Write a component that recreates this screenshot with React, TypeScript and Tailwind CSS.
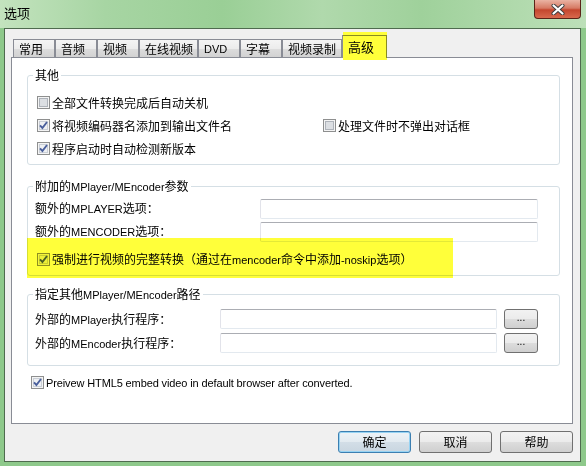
import React from 'react'

// Latin runs are drawn smaller, in a Tahoma-like face, the way the dialog mixes them
const latin = /([A-Za-z0-9./-]+(?: [A-Za-z0-9./-]+)*)/

const Txt = ({ t }: { t: string }) => (
  <>
    {t.split(latin).map((p, i) =>
      i % 2 === 1 ? (
        <span key={i} className="font-['Liberation_Sans',sans-serif] text-[11px]">
          {p}
        </span>
      ) : (
        <React.Fragment key={i}>{p}</React.Fragment>
      )
    )}
  </>
)

const Box = ({ checked }: { checked?: boolean }) => (
  <svg width="13" height="13" viewBox="0 0 13 13" className="shrink-0">
    <rect x="0.5" y="0.5" width="12" height="12" fill="#f4f4f4" stroke="#8e8f8f" />
    {checked ? (
      <>
        <rect x="2.5" y="2.5" width="8" height="8" fill="#eef0f3" stroke="#c9ced6" />
        <path d="M3 6.4 L5.4 9 L10 3" fill="none" stroke="#4a5f9c" strokeWidth="1.9" />
      </>
    ) : (
      <rect x="2.5" y="2.5" width="8" height="8" fill="#dcdfe3" stroke="#aeb3ba" />
    )}
  </svg>
)

const CheckRow = ({ checked, label, className = '' }: { checked?: boolean; label: string; className?: string }) => (
  <div className={`flex items-center gap-[2px] ${className}`}>
    <Box checked={checked} />
    <span className="whitespace-nowrap">
      <Txt t={label} />
    </span>
  </div>
)

const Field = ({ w }: { w: string }) => (
  <div className={`h-[20px] ${w} rounded-[2px] border border-[#e3e9ef] border-t-[#abadb3] border-l-[#e2e3ea] bg-white`} />
)

const WinButton = ({ label, primary }: { label: string; primary?: boolean }) => (
  <div
    className={`flex h-[22px] w-[73px] items-center justify-center rounded-[3px] border ${
      primary
        ? 'border-[#3c7fb1] bg-[linear-gradient(#eef3f7,#e2eaf0_50%,#d3dee7_50%,#c9d6e0)] shadow-[inset_0_0_0_1px_#97d3f3]'
        : 'border-[#707070] bg-[linear-gradient(#f2f2f2,#ebebeb_50%,#dddddd_50%,#cfcfcf)]'
    }`}
  >
    {label}
  </div>
)

const Legend = ({ t }: { t: string }) => (
  <legend className="ml-[5px] px-[2px] leading-[16px]">
    <Txt t={t} />
  </legend>
)

const tabs = [
  ['常用', 'w-[42px]'],
  ['音频', 'w-[42px]'],
  ['视频', 'w-[42px]'],
  ['在线视频', 'w-[59px]'],
  ['DVD', 'w-[42px]'],
  ['字幕', 'w-[42px]'],
  ['视频录制', 'w-[60px]'],
]

export default function App() {
  return (
    <div className="h-[466px] w-[586px] overflow-hidden bg-[#8ec98b] font-['Noto_Sans_CJK_SC',sans-serif] text-[12px] leading-[16px] text-black">
      {/* title bar */}
      <div className="flex h-[28px] items-start justify-between bg-[linear-gradient(90deg,#c3e3be_0%,#a7d5a3_18%,#9acf96_38%,#b0d9ac_55%,#9fd19b_72%,#bde0b9_100%)]">
        <div className="pl-[4px] pt-[5px] text-[13px]">选项</div>
        <div className="mr-[5px] flex h-[19px] w-[47px] items-center justify-center rounded-b-[4px] border border-t-0 border-[#5a2418] bg-[linear-gradient(#eab3a3,#d67a64_45%,#c4462e_55%,#d8694d)]">
          <svg width="14" height="11" viewBox="0 0 14 11">
            <path d="M2.5 1.5 L11.5 9.5 M11.5 1.5 L2.5 9.5" stroke="#3b3b3b" strokeWidth="4" strokeLinecap="round" />
            <path d="M2.5 1.5 L11.5 9.5 M11.5 1.5 L2.5 9.5" stroke="#ffffff" strokeWidth="2.2" strokeLinecap="round" />
          </svg>
        </div>
      </div>

      {/* client area */}
      <div className="ml-[4px] flex h-[434px] w-[577px] flex-col border border-[#4f6b4f] bg-[#f0f0f0] pl-[6px]">
        <div className="flex h-[28px] items-end pl-[2px]">
          {tabs.map(([t, w]) => (
            <div
              key={t}
              className={`flex h-[18px] ${w} items-center border border-b-0 border-[#898c95] bg-[linear-gradient(#f4f4f4,#ececec_50%,#dcdcdc_55%,#d2d2d2)] pl-[5px]`}
            >
              <Txt t={t} />
            </div>
          ))}
          <div className="relative z-10 mb-[-1px] h-[23px] w-[45px] border border-b-0 border-[#898c95] bg-white pl-[5px] pt-[3px] text-[13px]">
            高级
            <div className="absolute left-0 top-[-4px] h-[28px] w-[44px] bg-[#ffff3a] mix-blend-multiply" />
          </div>
        </div>

        <div className="relative h-[367px] w-[562px] border border-[#898c95] bg-white pl-[15px]">
          <fieldset className="mt-[9px] w-[533px] rounded-[3px] border border-[#d5dfe5] pb-[4px]">
            <Legend t="其他" />
            <div className="pl-[9px] pt-[8px]">
              <div className="flex h-[23px] items-center">
                <CheckRow label="全部文件转换完成后自动关机" />
              </div>
              <div className="flex h-[23px] items-center">
                <CheckRow checked label="将视频编码器名添加到输出文件名" className="w-[286px]" />
                <CheckRow label="处理文件时不弹出对话框" />
              </div>
              <div className="flex h-[23px] items-center">
                <CheckRow checked label="程序启动时自动检测新版本" />
              </div>
            </div>
          </fieldset>

          <fieldset className="mt-[13px] w-[533px] rounded-[3px] border border-[#d5dfe5] pb-[4px]">
            <Legend t="附加的MPlayer/MEncoder参数" />
            <div className="pl-[7px] pt-[2px]">
              <div className="grid h-[23px] grid-cols-[225px_278px] items-center">
                <span><Txt t="额外的MPLAYER选项：" /></span>
                <Field w="w-[278px]" />
              </div>
              <div className="grid h-[23px] grid-cols-[225px_278px] items-center">
                <span><Txt t="额外的MENCODER选项：" /></span>
                <Field w="w-[278px]" />
              </div>
              <div className="mt-[4px] flex h-[24px] items-center pl-[2px]">
                <CheckRow checked label="强制进行视频的完整转换（通过在mencoder命令中添加-noskip选项）" />
              </div>
            </div>
          </fieldset>

          <fieldset className="mt-[10px] w-[533px] rounded-[3px] border border-[#d5dfe5] pb-[10px]">
            <Legend t="指定其他MPlayer/MEncoder路径" />
            <div className="pl-[7px] pt-[4px]">
              {['外部的MPlayer执行程序：', '外部的MEncoder执行程序：'].map((l) => (
                <div key={l} className="grid h-[24px] grid-cols-[185px_277px_41px] items-center">
                  <span><Txt t={l} /></span>
                  <Field w="w-[277px]" />
                  <div className="ml-[7px] flex h-[20px] w-[34px] items-center justify-center rounded-[3px] border border-[#707070] bg-[linear-gradient(#f2f2f2,#ebebeb_50%,#dddddd_50%,#cfcfcf)] pb-[3px] font-['Liberation_Sans',sans-serif] text-[10px]">
                    ...
                  </div>
                </div>
              ))}
            </div>
          </fieldset>

          <div className="ml-[4px] mt-[6px] flex h-[20px] items-center tracking-[-0.12px]">
            <CheckRow checked label="Preivew HTML5 embed video in default browser after converted." />
          </div>

          {/* highlight over the noskip option */}
          <div className="absolute left-[15px] top-[180px] h-[40px] w-[426px] bg-[#ffff3a] mix-blend-multiply" />
        </div>

        <div className="mt-[7px] flex justify-end gap-[8px] pr-[7px]">
          <WinButton primary label="确定" />
          <WinButton label="取消" />
          <WinButton label="帮助" />
        </div>
      </div>
    </div>
  )
}
